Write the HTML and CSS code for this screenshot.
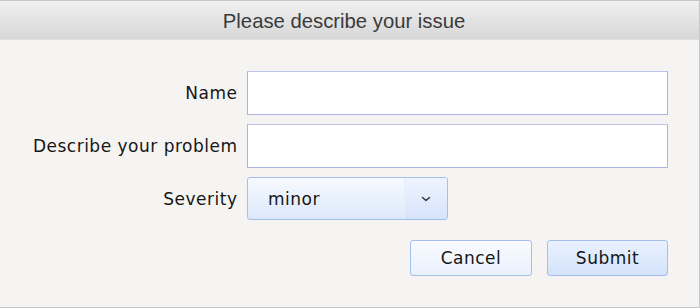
FILE: index.html
```html
<!DOCTYPE html>
<html>
<head>
<meta charset="utf-8">
<link rel="stylesheet" href="styles.css">
</head>
<body>
<div class="dialog">
  <div class="titlebar">Please describe your issue</div>
  <div class="content">
    <form class="form">
      <label class="label" for="name">Name</label>
      <input class="field" id="name" type="text">
      <label class="label" for="problem">Describe your problem</label>
      <input class="field" id="problem" type="text">
      <label class="label" for="sev">Severity</label>
      <div class="select" id="sev">
        <span class="select-value">minor</span>
        <span class="select-arrow">
          <svg width="12" height="8" viewBox="0 0 12 8"><path d="M2.5 2.5 L6 5.5 L9.5 2.5" fill="none" stroke="#3a3a3a" stroke-width="1.6" stroke-linecap="round" stroke-linejoin="round"/></svg>
        </span>
      </div>
    </form>
    <div class="actions">
      <button class="btn btn-cancel" type="button">Cancel</button>
      <button class="btn btn-submit" type="button">Submit</button>
    </div>
  </div>
</div>
</body>
</html>
```

FILE: styles.css
```css
html, body {
  margin: 0;
  padding: 0;
  background: #f5f4f2;
}
.dialog {
  box-sizing: border-box;
  width: 700px;
  height: 308px;
  border-top: 1px solid #c6c6c6;
  border-right: 1px solid #c6c6c6;
  border-bottom: 1px solid #c6c6c6;
  background: #f5f4f2;
  display: flex;
  flex-direction: column;
}
.titlebar {
  box-sizing: border-box;
  height: 39px;
  padding-top: 2px;
  padding-right: 11px;
  line-height: 36px;
  border-bottom: 1px solid #e0e0e0;
  background: linear-gradient(#f0f0f0, #d7d7d7);
  text-align: center;
  font-family: "Liberation Sans", Arial, sans-serif;
  font-size: 20.3px;
  color: #3a3a3a;
}
.content {
  padding: 31px 31px 0 32px;
  font-family: "DejaVu Sans", sans-serif;
  font-size: 17px;
  letter-spacing: 0.5px;
  color: #161616;
}
.form {
  margin: 0;
  display: grid;
  grid-template-columns: 205px 1fr;
  column-gap: 10px;
  row-gap: 9px;
  align-items: center;
}
.label {
  justify-self: end;
  white-space: nowrap;
  margin-right: -0.5px;
}
.field {
  box-sizing: border-box;
  height: 44px;
  margin: 0;
  border: 1px solid #aab4e2;
  border-top-color: #bcc4ea;
  background: #ffffff;
  outline: none;
}
.select {
  box-sizing: border-box;
  width: 201px;
  height: 43px;
  display: flex;
  border: 1px solid #a3bfee;
  border-radius: 3px;
  background: linear-gradient(#f7faff, #dce8fb);
  overflow: hidden;
}
.select-value {
  flex: 1;
  display: flex;
  align-items: center;
  padding-left: 20px;
}
.select-arrow {
  width: 42px;
  display: flex;
  align-items: center;
  justify-content: center;
  background: linear-gradient(#eef4fe, #d6e4fb);
  border-left: 1px solid #e6eefc;
}
.actions {
  display: flex;
  justify-content: flex-end;
  gap: 15px;
  margin-top: 20px;
}
.btn {
  box-sizing: border-box;
  height: 36px;
  margin: 0;
  border: 1px solid #a3bfee;
  border-radius: 3px;
  font-family: "DejaVu Sans", sans-serif;
  font-size: 17px;
  letter-spacing: 0.5px;
  color: #161616;
  padding: 0;
}
.btn-cancel {
  width: 122px;
  background: linear-gradient(#f9fbff, #e9f1fd);
}
.btn-submit {
  width: 121px;
  background: linear-gradient(#e9f1ff, #d4e3fb);
}
```
